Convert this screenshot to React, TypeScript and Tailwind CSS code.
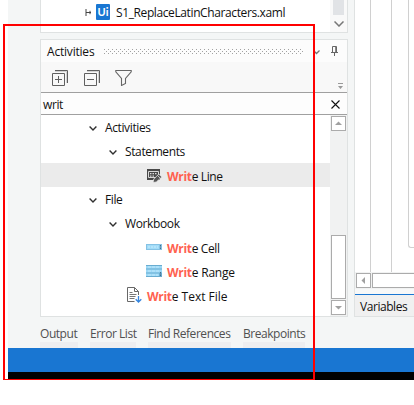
import React from "react";

const Chevron = ({ className = "" }: { className?: string }) => (
  <svg width="8" height="5" viewBox="0 0 8 5" className={className} fill="none" stroke="#303030" strokeWidth="1.4">
    <path d="M.6 .6 4 4 7.4 .6" />
  </svg>
);

const Label = ({ children, width }: { children: React.ReactNode; width: string }) => (
  <span className={`block whitespace-nowrap ${width}`}>{children}</span>
);

const WriteLineIcon = () => (
  <svg width="15" height="15" viewBox="0 0 15 15">
    <path d="M0 1h13v11H0z" fill="#484848" />
    <path d="M1.500 3.500h10v6h-10z" fill="#484848" stroke="#e8e8e8" strokeWidth=".9" />
    <path d="M3 5h1.500v1.300H3zM5.500 5H7v1.300H5.500zM8 5h1.500v1.300H8zM3 7.500h1.500v1.300H3zM5.500 7.500H7v1.300H5.500z" fill="#ddd" />
    <path d="m6 14.500.8-3.500 5-5 3 3-5.500 5z" fill="#555" stroke="#ececec" strokeWidth=".8" />
    <path d="m10.500 7.500 3 3" stroke="#ddd" strokeWidth=".8" />
  </svg>
);

const CellIcon = () => (
  <svg width="16" height="6" viewBox="0 0 16 6">
    <path d="M0 0h16v6H0z" fill="#85c2e4" />
    <path d="M1 1h12v4H1z" fill="#a2dcf8" />
    <path d="M2 3h10" stroke="#c8ecfc" strokeDasharray="2 1" />
    <path d="M14.500 1v4" stroke="#496f88" strokeDasharray="1.500 1" />
  </svg>
);

const RangeIcon = () => (
  <svg width="16" height="12" viewBox="0 0 16 12">
    <path d="M0 0h16v12H0z" fill="#69acd0" />
    <path d="M0 1h16v2.500H0zM0 4.500h16v3H0zM0 8.500h13V11H0z" fill="#9cd8f6" />
    <path d="M2 2h11M2 6h11M2 10h10" stroke="#bfe8fb" strokeDasharray="3 1" />
    <path d="M14.500 7v4" stroke="#426f8c" strokeDasharray="1.500 1" />
  </svg>
);

const TextFileIcon = () => (
  <svg width="15" height="16" viewBox="0 0 15 16" fill="none">
    <path d="M7.500 14.500h-7V.5h7l4 4V8M7.500.5v4h4" stroke="#686868" />
    <path d="M2.500 5.500h3M2.500 7.500h7M2.500 9.500h6M2.500 11.500h5" stroke="#777" />
    <path d="M11.500 9v6M8.700 12.200l2.800 2.800 2.800-2.800" stroke="#3585df" strokeWidth="1.300" />
  </svg>
);

const StackIcon = ({ plus }: { plus?: boolean }) => (
  <svg width="16" height="16" viewBox="0 0 16 16" fill="none" stroke="#606060">
    <path d="M.5 3.500h12v12H.5zM3 .5h12.500V13M3 9.500h7" />
    <path d="M3 1.500h11.500V13" stroke="#bbb" strokeWidth=".6" />
    {plus && <path d="M6.500 6v7" />}
  </svg>
);

const Group = ({ name, pad, width }: { name: string; pad: string; width: string }) => (
  <div className={`flex h-6 items-center pt-[2px] ${pad}`}>
    <Chevron />
    <div className="ml-2"><Label width={width}>{name}</Label></div>
  </div>
);

const Activity = ({ icon, rest, pad, selected, gap = "w-[21px]", spacing = "" }: { icon: React.ReactNode; rest: string; pad: string; selected?: boolean; gap?: string; spacing?: string }) => (
  <div className={`flex h-6 items-center ${pad} ${selected ? "bg-[#ebebeb]" : ""}`}>
    <span className={`shrink-0 ${gap}`}>{icon}</span>
    <span className={`whitespace-nowrap pt-[3px] ${spacing}`}><b className="font-bold tracking-[-0.3px] text-[#ff6250]">Writ</b>{rest}</span>
  </div>
);

const ScrollButton = ({ d }: { d: string }) => (
  <div className="flex size-[15px] shrink-0 items-center justify-center border border-[#ababab] bg-white">
    <svg width="7" height="7" viewBox="0 0 7 7"><path d={d} fill="#a0a0a0" /></svg>
  </div>
);

export default function App() {
  return (
    <div className="relative h-[405px] w-[414px] overflow-hidden bg-white font-['Open_Sans','Noto_Sans',sans-serif] text-[12px] leading-4 tracking-[-0.38px] text-[#111]">
      <div className="ml-2 flex h-[348px] bg-[#f4f6f6] pl-8">
        <div className="flex w-[308px] shrink-0 flex-col">
          <div className="flex h-[33px] border border-t-0 border-[#dfe2e2] bg-white">
            <div className="flex flex-1 items-start pl-[44px] pt-1">
              <svg width="7" height="7" viewBox="0 0 7 7" className="mt-[5px]"><path d="M1 0v7M1 3.500h5M5 1.800v3.400" stroke="#444" fill="none" /></svg>
              <span className="ml-1 flex h-4 w-[14px] items-center justify-center rounded-[1px] bg-[#1976d2] font-['Lato',sans-serif] text-[11px] font-bold tracking-normal text-white">Ui</span>
              <span className="ml-[6px] mt-[1px] whitespace-nowrap tracking-[-0.39px]">S1_ReplaceLatinCharacters.xaml</span>
            </div>
            <div className="flex w-[17px] flex-col items-center bg-[#f9f9f9]">
              <div className="h-[15px] w-[11px] bg-[#e1e3e6]" />
              <svg width="10" height="6" viewBox="0 0 10 6" className="mt-[6px]"><path d="m.5.5 4.500 4.500L9.500.5" fill="none" stroke="#777" strokeWidth="1.500" /></svg>
            </div>
          </div>

          <div className="mt-[6px] h-[278px] border border-[#dfe2e2] bg-white">
            <div className="flex h-[22px] items-center bg-[#fcfcfc] pl-[6px]">
              <div className="pt-[2px] tracking-[-0.2px]"><Label width="w-[56px]">Activities</Label></div>
              <svg width="202" height="5" className="mt-[1px]">
                <defs><pattern id="grip" width="4" height="4" patternUnits="userSpaceOnUse"><path d="M1 0h1v1H1zM3 2h1v1H3z" fill="#a2a2a2" /></pattern></defs>
                <rect width="200" height="5" fill="url(#grip)" />
              </svg>
              <svg width="7" height="5" viewBox="0 0 7 5" className="ml-[8px] mt-[2px]"><path d="m.5.5 3 3 3-3" stroke="#777" fill="none" strokeWidth="1.300" /></svg>
              <svg width="7" height="10" viewBox="0 0 7 10" className="ml-[11px]"><path d="M1.500 6V.5h4V6M0 6.500h7M3.500 7v3" fill="none" stroke="#666" /><path d="M4.500 1v5" stroke="#888" /></svg>
            </div>
            <div className="flex h-[30px] items-start bg-[#f8f8f8] pl-[11px] pt-2">
              <StackIcon plus />
              <div className="ml-4"><StackIcon /></div>
              <svg width="17" height="16" viewBox="0 0 17 16" className="ml-[15px]"><path d="M.8.5h15.400v1.300l-5.700 6.700v5l-4 2v-7L.8 1.800z" fill="none" stroke="#666" strokeWidth="1.100" /></svg>
              <svg width="5" height="6" viewBox="0 0 5 6" className="ml-auto mr-1 mt-[13px]"><path d="M0 0h5v1H0zM0 3h5L2.500 6z" fill="#999" /></svg>
            </div>
            <div className="flex h-[23px] items-center border-y border-[#a0a0a0] bg-[#fdfdfd] pl-[2px] pr-[7px]">
              <span className="pt-[3px] tracking-[-0.4px]">writ</span>
              <svg width="9" height="9" viewBox="0 0 9 9" className="ml-auto mt-[2px]"><path d="m.5.5 8 8m0-8-8 8" stroke="#111" strokeWidth="1.100" /></svg>
            </div>
            <div className="flex h-[201px]">
              <div className="min-w-0 flex-1">
                <Group name="Activities" pad="pl-[48px]" width="w-[48px]" />
                <Group name="Statements" pad="pl-[68px]" width="w-[60px]" />
                <Activity icon={<WriteLineIcon />} rest="e Line" pad="pl-[106px]" gap="w-[20px]" selected />
                <Group name="File" pad="pl-[48px]" width="w-[20px]" />
                <Group name="Workbook" pad="pl-[68px]" width="w-[56px]" />
                <Activity icon={<CellIcon />} rest="e Cell" pad="pl-[105px]" />
                <Activity icon={<RangeIcon />} rest="e Range" pad="pl-[105px]" spacing="tracking-[-0.2px]" />
                <Activity icon={<TextFileIcon />} rest="e Text File" pad="pl-[86px]" gap="w-[20px]" spacing="tracking-[0px]" />
              </div>
              <div className="flex w-[17px] flex-col items-center bg-[#f1f2f2] pt-[1px]">
                <ScrollButton d="M0 5h7L3.500 1.500z" />
                <div className="mt-[104px] h-16 w-[15px] shrink-0 border border-[#ababab] bg-white" />
                <div className="mt-[1px]"><ScrollButton d="M0 2h7L3.500 5.500z" /></div>
              </div>
            </div>
          </div>

          <div className="flex h-[31px] gap-3 pt-[9px] tracking-[-0.45px] text-[#505050]">
            <div className="w-[38px] whitespace-nowrap border-b-[6px] border-[#eeeef0]">Output</div>
            <div className="w-[46px] whitespace-nowrap border-b-[6px] border-[#eeeef0]">Error List</div>
            <div className="w-[83px] whitespace-nowrap border-b-[6px] border-[#eeeef0]">Find References</div>
            <div className="w-[62px] whitespace-nowrap border-b-[6px] border-[#eeeef0]">Breakpoints</div>
          </div>
        </div>

        <div className="ml-[6px] flex h-[317px] flex-1 flex-col border-b border-l border-[#dfe2e2] bg-white">
          <div className="flex h-[272px]">
            <div className="ml-[15px] w-[22px] border-x border-[#d0d0d0]" />
            <div className="ml-4 h-[248px] w-2 rounded-bl-[3px] border-b border-l border-[#d0d0d0]" />
          </div>
          <div className="flex h-[17px] items-center gap-[1px] bg-[#f1f2f2] pl-[1px]">
            <ScrollButton d="M5 0v7L1.500 3.500z" />
            <div className="h-[15px] flex-1 border border-r-0 border-[#ababab] bg-white" />
          </div>
          <div className="h-[5px] bg-[#f7f8f8]" />
          <div className="h-[22px] border-t border-[#1976d2] bg-[#f0f0f0] pl-[5px] pt-1 tracking-[-0.45px]">Variables</div>
        </div>
      </div>
      <div className="ml-2 h-6 bg-[#1976d2]" />
      <div className="ml-2 h-2 bg-black" />
      <div className="absolute left-[3px] top-6 h-[356px] w-[312px] border-2 border-b border-[#ff0000]" />
    </div>
  );
}
